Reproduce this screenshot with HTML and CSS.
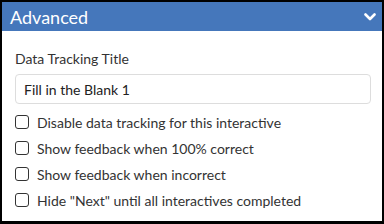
FILE: index.html
```html
<!DOCTYPE html>
<html lang="en">
<head>
  <meta charset="UTF-8">
  <meta name="viewport" content="width=device-width, initial-scale=1.0">
  <title>Advanced</title>
  <link rel="stylesheet" href="styles.css">
</head>
<body>
  <div class="panel">
    <div class="panel-header">
      <span class="panel-title">Advanced</span>
      <svg class="chevron" width="12" height="8" viewBox="0 0 12 8" fill="none" xmlns="http://www.w3.org/2000/svg">
        <path d="M1.5 1.5L6 6L10.5 1.5" stroke="#FFFFFF" stroke-width="2.6" stroke-linecap="round" stroke-linejoin="round"/>
      </svg>
    </div>

    <div class="panel-body">
      <label class="field-label" for="trackingTitle">Data Tracking Title</label>
      <input id="trackingTitle" class="text-input" type="text" value="Fill in the Blank 1">

      <div class="options">
        <label class="option"><span class="box"></span>Disable data tracking for this interactive</label>
        <label class="option"><span class="box"></span>Show feedback when 100% correct</label>
        <label class="option"><span class="box"></span>Show feedback when incorrect</label>
        <label class="option"><span class="box"></span>Hide "Next" until all interactives completed</label>
      </div>
    </div>
  </div>
</body>
</html>
```

FILE: styles.css
```css
body {
  font-family: Lato, sans-serif;
  margin: 0;
  background-color: #000000;
}

.panel {
  box-sizing: border-box;
  width: 384px;
  height: 224px;
  border: 2px solid #000000;
  border-bottom-width: 3px;
  background-color: #FFFFFF;
}

.panel-header {
  display: flex;
  align-items: center;
  justify-content: space-between;
  height: 29px;
  padding: 0 6px 0 8px;
  background-color: #4577BB;
}

.panel-title {
  color: #FFFFFF;
  font-size: 18px;
}

.chevron {
  display: block;
}

.panel-body {
  display: flex;
  flex-direction: column;
  padding: 19px 11px 0 13px;
}

.field-label {
  font-size: 14px;
  color: #333333;
  line-height: 17px;
}

.text-input {
  box-sizing: border-box;
  height: 30px;
  margin-top: 7px;
  padding: 0 8px;
  border: 1px solid #DDDDDD;
  border-radius: 4px;
  font-family: Lato, sans-serif;
  font-size: 14px;
  color: #222222;
}

.options {
  display: flex;
  flex-direction: column;
  margin-top: 5px;
}

.option {
  display: flex;
  align-items: center;
  gap: 8px;
  height: 26px;
  font-size: 14px;
  color: #333333;
}

.box {
  box-sizing: border-box;
  width: 14px;
  height: 14px;
  border: 1.5px solid #333333;
  border-radius: 3px;
}
```
